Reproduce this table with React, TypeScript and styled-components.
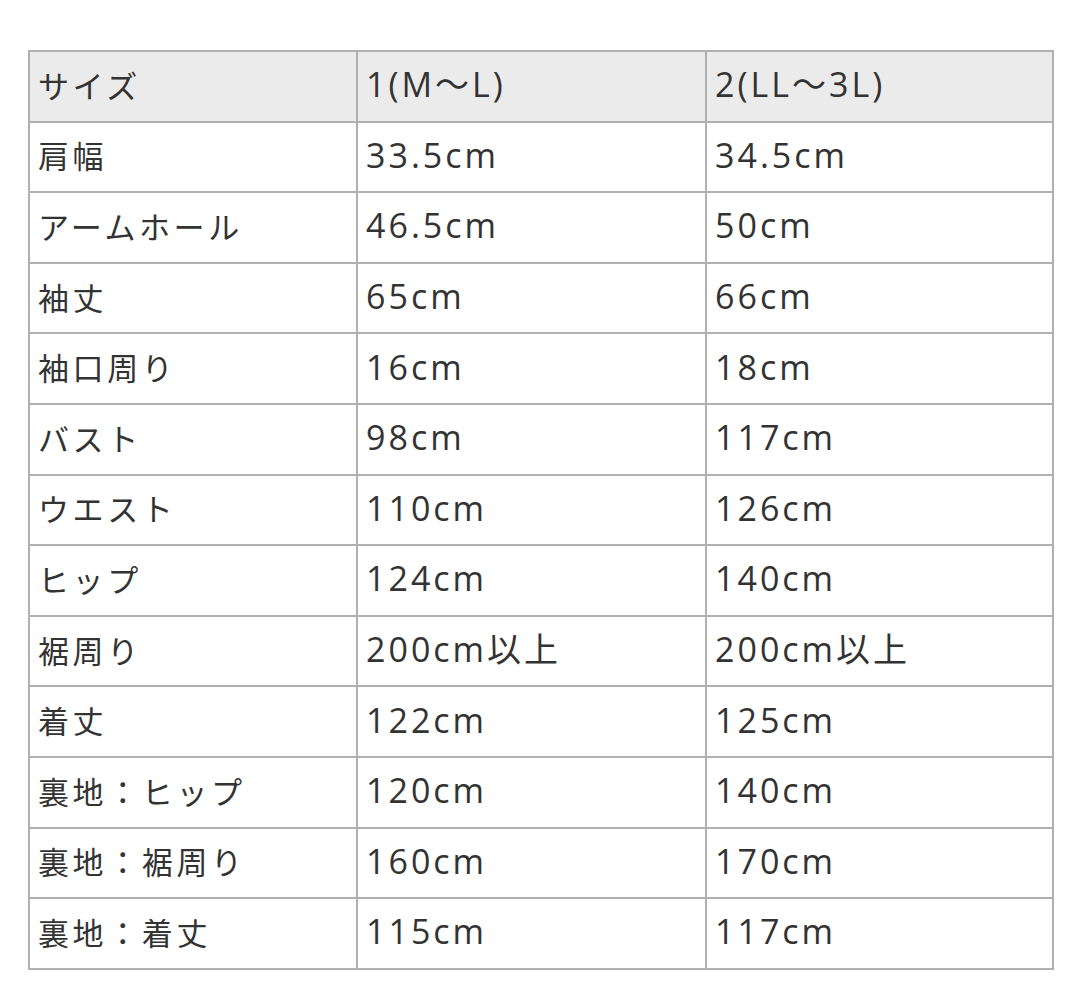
import styled, { createGlobalStyle } from "styled-components";

const GlobalStyle = createGlobalStyle`
  html, body {
    margin: 0;
    padding: 0;
    background: #ffffff;
  }
`;

const Page = styled.div`
  padding: 50px 28px 0 28px;
  font-family: "Noto Sans CJK JP", "Noto Sans", sans-serif;
  color: #333333;
`;

const Table = styled.table`
  width: 1024px;
  border-collapse: collapse;
  table-layout: fixed;
  border: 2px solid #a9a9a9;
`;

const Cell = styled.td<{ $head?: boolean }>`
  height: 64.6px;
  padding: 0 0 4px 8px;
  border: 2px solid #b0b0b0;
  background: ${(p) => (p.$head ? "#ebebeb" : "#ffffff")};
  font-size: 31px;
  font-weight: 400;
  line-height: 1;
  letter-spacing: 3.6px;
  vertical-align: middle;
  white-space: nowrap;
`;

// value columns: wide latin digits
const ValueCell = styled(Cell)`
  font-family: "Open Sans", "Noto Sans CJK JP", sans-serif;
  font-size: 34px;
  letter-spacing: 3px;
`;

const rows: [string, string, string][] = [
  ["肩幅", "33.5cm", "34.5cm"],
  ["アームホール", "46.5cm", "50cm"],
  ["袖丈", "65cm", "66cm"],
  ["袖口周り", "16cm", "18cm"],
  ["バスト", "98cm", "117cm"],
  ["ウエスト", "110cm", "126cm"],
  ["ヒップ", "124cm", "140cm"],
  ["裾周り", "200cm以上", "200cm以上"],
  ["着丈", "122cm", "125cm"],
  ["裏地：ヒップ", "120cm", "140cm"],
  ["裏地：裾周り", "160cm", "170cm"],
  ["裏地：着丈", "115cm", "117cm"],
];

const App = () => {
  return (
    <Page>
      <GlobalStyle />
      <Table>
        <colgroup>
          <col style={{ width: 328 }} />
          <col style={{ width: 349 }} />
          <col style={{ width: 347 }} />
        </colgroup>
        <tbody>
          <tr>
            <Cell $head>サイズ</Cell>
            <ValueCell $head>1(M〜L)</ValueCell>
            <ValueCell $head>2(LL〜3L)</ValueCell>
          </tr>
          {rows.map(([label, a, b]) => (
            <tr key={label}>
              <Cell>{label}</Cell>
              <ValueCell>{a}</ValueCell>
              <ValueCell>{b}</ValueCell>
            </tr>
          ))}
        </tbody>
      </Table>
    </Page>
  );
};

export default App;
